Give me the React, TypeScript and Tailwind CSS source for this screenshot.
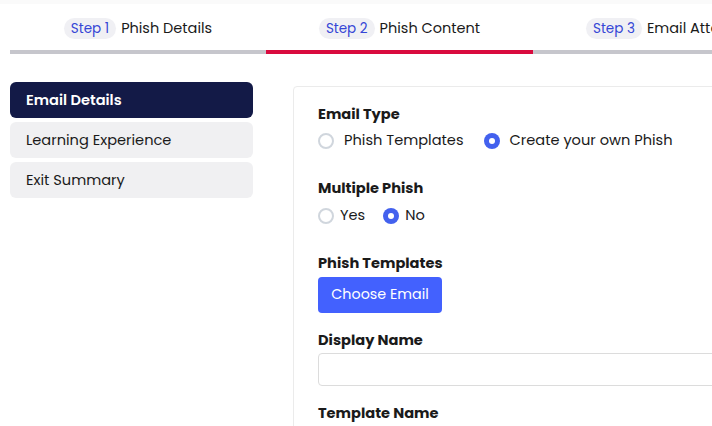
import React from "react";

function Radio({ checked }: { checked: boolean }) {
  return checked ? (
    <span className="flex h-4 w-4 shrink-0 items-center justify-center rounded-full bg-[#4361ee]">
      <span className="h-[6px] w-[6px] rounded-full bg-white" />
    </span>
  ) : (
    <span className="h-4 w-4 shrink-0 rounded-full border-2 border-[#d0d6dd] bg-white" />
  );
}

function Tab({ step, title, active, w, start }: { step: string; title: string; active?: boolean; w: string; start?: boolean }) {
  return (
    <div className={`flex shrink-0 flex-col ${w}`}>
      <div className={`flex h-[21px] items-center gap-[5px] ${start ? "justify-start pl-[53px]" : "justify-center"}`}>
        <span className="rounded-full bg-[#f0f0f4] px-[7px] text-[13.5px] leading-[21px] text-[#3546d6]">{step}</span>
        <span className="whitespace-nowrap text-[14.5px] leading-[21px] text-[#1a1a1a]">{title}</span>
      </div>
      <div className={`mt-[11px] h-[4px] ${active ? "bg-[#d90b3e]" : "bg-[#c6c6cc]"}`} />
    </div>
  );
}

export default function App() {
  return (
    <div className="h-[426px] w-[712px] overflow-hidden bg-white font-['Poppins','Open_Sans',sans-serif] text-[#1a1a1a]">
      <div className="h-[4px] bg-[#fafafa]" />
      <div className="flex pl-[10px] pt-[14px]">
        <Tab step="Step 1" title="Phish Details" w="w-[256px]" />
        <Tab step="Step 2" title="Phish Content" w="w-[267px]" active />
        <Tab step="Step 3" title="Email Attachment" w="w-[267px]" start />
      </div>
      <div className="mt-[28px] flex gap-[40px] pl-[10px]">
        <div className="flex w-[243px] shrink-0 flex-col gap-[4px]">
          <div className="flex h-[36px] items-center rounded-[6px] bg-[#131a47] px-4 pt-[1px] text-[14.6px] font-semibold text-white">Email Details</div>
          <div className="flex h-[36px] items-center rounded-[6px] bg-[#f0f0f2] px-4 pt-[1px] text-[14.6px]">Learning Experience</div>
          <div className="flex h-[36px] items-center rounded-[6px] bg-[#f0f0f2] px-4 pt-[1px] text-[14.6px]">Exit Summary</div>
        </div>
        <div className="mt-[4px] h-[400px] w-[600px] shrink-0 rounded-tl-[4px] border border-[#ebebeb] px-6 pt-4">
          <div className="text-[14.6px] font-bold leading-[22px]">Email Type</div>
          <div className="mt-[5px] flex h-[22px] items-center text-[14.6px]">
            <Radio checked={false} />
            <span className="ml-[10px]">Phish Templates</span>
            <span className="ml-[20px]"><Radio checked /></span>
            <span className="ml-[10px]">Create your own Phish</span>
          </div>
          <div className="mt-[25px] text-[14.6px] font-bold leading-[22px]">Multiple Phish</div>
          <div className="mt-[6px] flex h-[22px] items-center text-[14.6px]">
            <Radio checked={false} />
            <span className="ml-[6px]">Yes</span>
            <span className="ml-[18px]"><Radio checked /></span>
            <span className="ml-[6px]">No</span>
          </div>
          <div className="mt-[25px] text-[14.6px] font-bold leading-[22px]">Phish Templates</div>
          <button className="mt-[3px] flex h-[36px] w-[124px] items-center justify-center rounded-[4px] bg-[#4361fe] text-[14.3px] text-white">Choose Email</button>
          <div className="mt-[16px] text-[14.6px] font-bold leading-[22px]">Display Name</div>
          <div className="mt-[2px] h-[33px] w-full rounded-[4px] border border-[#dcdcdc]" />
          <div className="mt-[16px] text-[14.6px] font-bold leading-[22px]">Template Name</div>
        </div>
      </div>
    </div>
  );
}
